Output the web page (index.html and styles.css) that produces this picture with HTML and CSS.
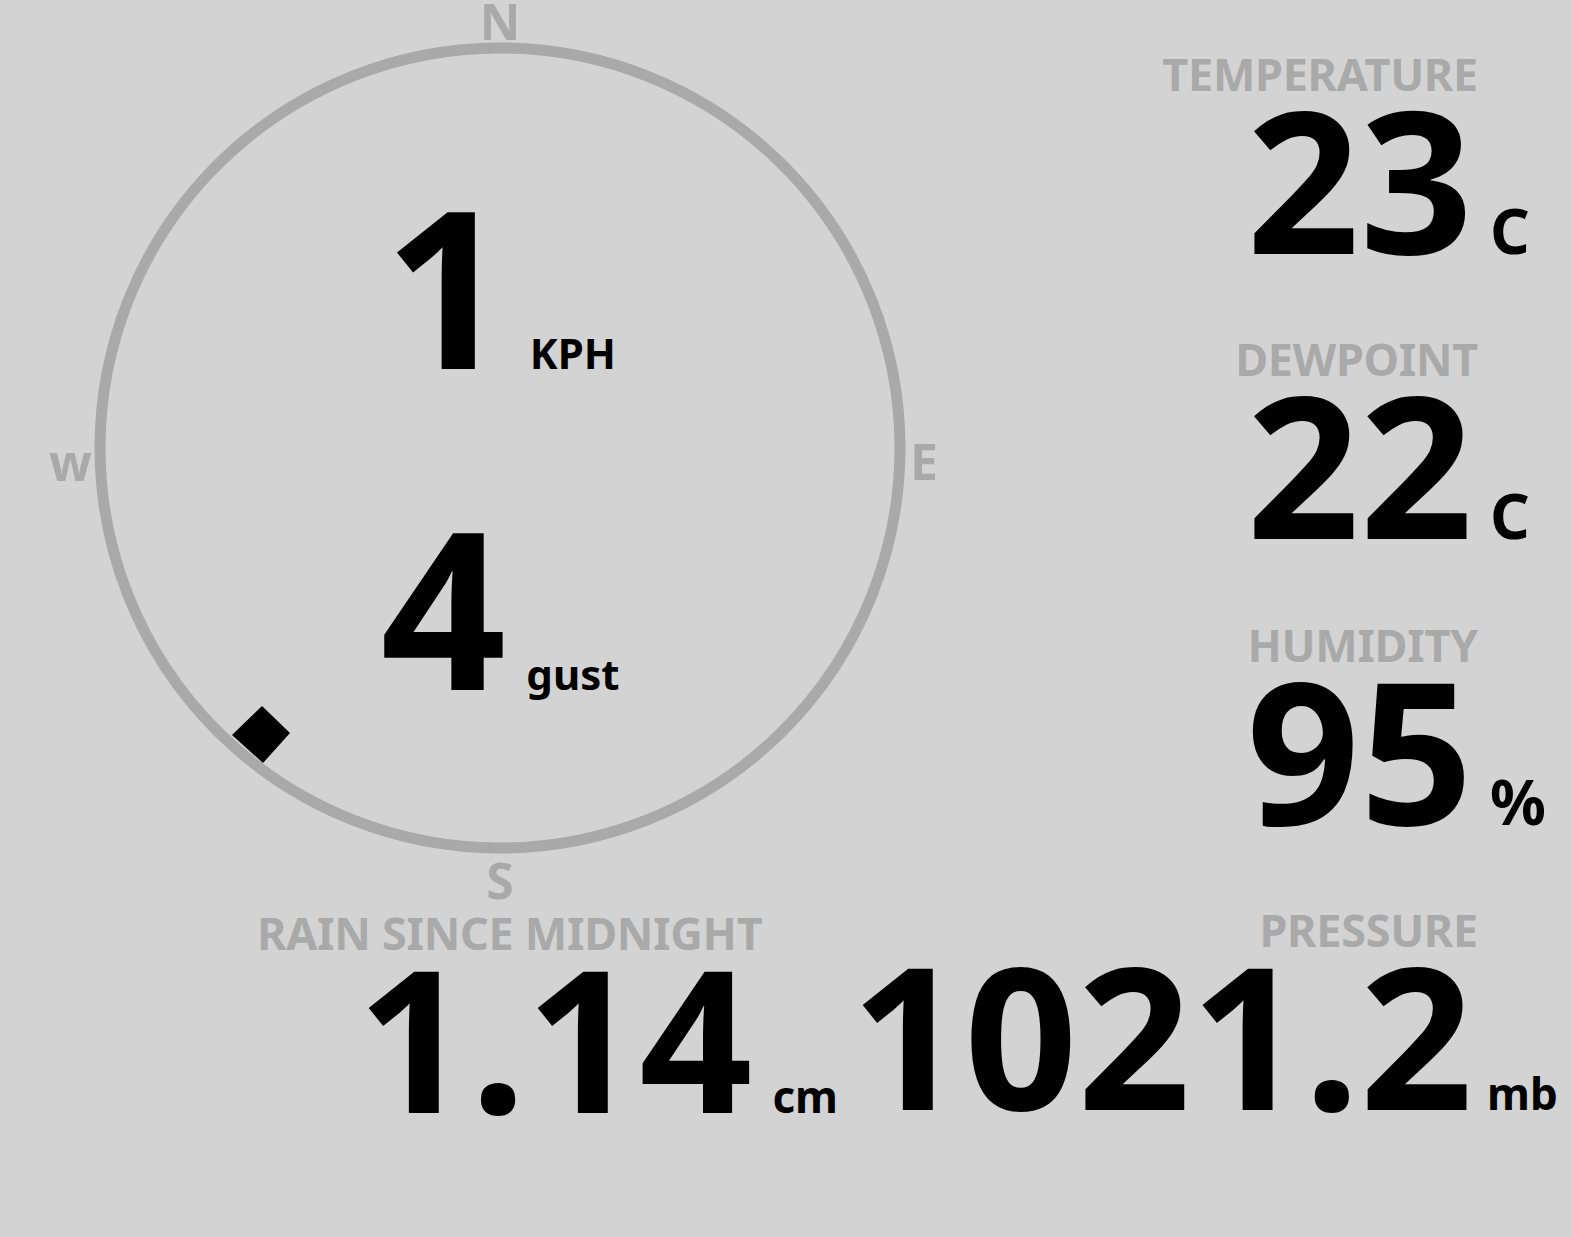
FILE: index.html
```html
<!doctype html>
<html>
  <head>
    <meta charset="UTF-8" />
    <title>Weather</title>
    <link rel="stylesheet" href="styles.css">
  </head>
  <body>
    <div class="board">
      <div class="left">
        <div class="compass">
          <svg class="dial" width="1000" height="910" viewBox="0 0 1000 910">
            <circle cx="500" cy="448" r="400" fill="none" stroke="#a9a9a9" stroke-width="11" />
            <polygon points="262,706 290,733 263,763 232,735" fill="#000" />
            <text x="500" y="40" text-anchor="middle">N</text>
            <text x="910" y="480">E</text>
            <text x="500" y="899" text-anchor="middle">S</text>
            <text x="49" y="481">w</text>
          </svg>
          <div class="wind">
            <div class="wind-row">
              <span class="wind-num">1</span>
              <span class="wind-unit">KPH</span>
            </div>
            <div class="wind-row">
              <span class="wind-num">4</span>
              <span class="wind-unit">gust</span>
            </div>
          </div>
        </div>
        <div class="stat rain">
          <div class="label">RAIN SINCE MIDNIGHT</div>
          <div class="reading">
            <span class="num">1.14</span>
            <span class="unit small">cm</span>
          </div>
        </div>
      </div>

      <div class="right">
        <div class="stat">
          <div class="label">TEMPERATURE</div>
          <div class="reading">
            <span class="num">23</span>
            <span class="unit">C</span>
          </div>
        </div>
        <div class="stat">
          <div class="label">DEWPOINT</div>
          <div class="reading">
            <span class="num">22</span>
            <span class="unit">C</span>
          </div>
        </div>
        <div class="stat">
          <div class="label">HUMIDITY</div>
          <div class="reading">
            <span class="num">95</span>
            <span class="unit">%</span>
          </div>
        </div>
        <div class="stat">
          <div class="label">PRESSURE</div>
          <div class="reading">
            <span class="num">1021.2</span>
            <span class="unit small">mb</span>
          </div>
        </div>
      </div>
    </div>
  </body>
</html>
```

FILE: styles.css
```css
html,
body {
  margin: 0;
  background-color: #d3d3d3;
}
body {
  font-family: "Noto Sans", "DejaVu Sans", sans-serif;
  font-weight: bold;
  color: #000;
  overflow: hidden;
}
.board {
  display: flex;
  width: 1571px;
  height: 1237px;
}
.left {
  flex: none;
  width: 1000px;
}
.right {
  flex: 1;
  min-width: 0;
  display: flex;
  flex-direction: column;
  padding-top: 51px;
  gap: 80px;
}

/* compass */
.compass {
  position: relative;
  width: 1000px;
  height: 910px;
}
.dial {
  position: absolute;
  top: 0;
  left: 0;
}
.dial text {
  font-family: "Noto Sans", sans-serif;
  font-weight: bold;
  font-size: 50px;
  fill: #a9a9a9;
}
.wind {
  position: absolute;
  top: 0;
  left: 0;
  right: 0;
  bottom: 0;
  display: flex;
  flex-direction: column;
  align-items: center;
  padding-top: 174px;
  gap: 101px;
}
.wind-row {
  display: flex;
  align-items: baseline;
  gap: 20px;
}
.wind-num {
  font-size: 220px;
  line-height: 1;
}
.wind-unit {
  font-size: 42px;
  line-height: 1;
}

/* stats */
.stat .label {
  font-size: 45px;
  line-height: 46px;
  letter-spacing: -0.3px;
  color: #a9a9a9;
  text-align: right;
  padding-right: 93px;
  white-space: nowrap;
}
.reading {
  display: flex;
  justify-content: flex-end;
  align-items: baseline;
  white-space: nowrap;
  margin-top: 1px;
}
.reading .num {
  font-size: 198px;
  line-height: 0.8;
}
.reading .unit {
  flex: none;
  width: 98px;
  box-sizing: border-box;
  padding-left: 17px;
  font-size: 62px;
  line-height: 0.8;
}
.reading .unit.small {
  font-size: 44px;
  padding-left: 14px;
}
.rain .label {
  text-align: left;
  padding-left: 257px;
  padding-right: 0;
}
.rain .reading {
  padding-right: 162px;
}
.rain .reading .unit {
  width: auto;
  padding-left: 20px;
}
```
